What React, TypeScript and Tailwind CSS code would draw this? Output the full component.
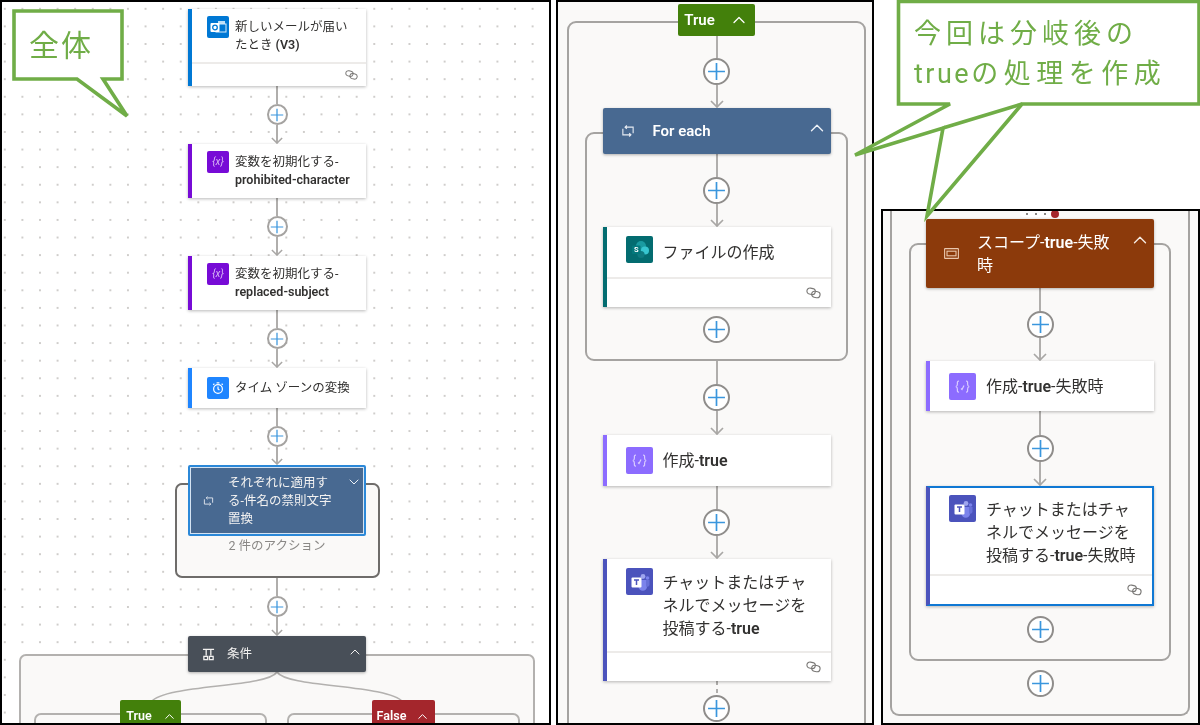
import React from "react";
import { ChevronUp, ChevronDown } from "lucide-react";

const Plus = ({ big }: { big?: boolean }) => (
  <div className={big ? "flex h-[27px] w-[27px] shrink-0 items-center justify-center rounded-full border-2 border-[#8f8d8b] bg-white" : "flex h-[21px] w-[21px] shrink-0 items-center justify-center rounded-full border-2 border-[#a5a3a1] bg-white"}>
    <svg viewBox="0 0 18 18" className={big ? "h-[19px] w-[19px]" : "h-[14px] w-[14px]"} fill="none" stroke="#3a96dd" strokeWidth="1.6">
      <path d="M9 1v16M1 9h16" />
    </svg>
  </div>
);

const Arrow = ({ big }: { big?: boolean }) => (
  <svg viewBox="0 0 14 8" className={big ? "-mt-[7px] h-[8px] w-[14px]" : "-mt-[6px] h-[7px] w-[12px]"} fill="none" stroke="#a9a7a5" strokeWidth="1.7">
    <path d="M1 1l6 6 6-6" />
  </svg>
);

const Connector = ({ big, className }: { big?: boolean; className: string }) => (
  <div className={`flex flex-col items-center ${className}`}>
    <div className="w-[2px] grow bg-[#b0aeac]" />
    <Plus big={big} />
    <div className="w-[2px] grow bg-[#b0aeac]" />
    <Arrow big={big} />
  </div>
);

const LinkIcon = ({ big }: { big?: boolean }) => (
  <svg viewBox="0 0 16 12" className={big ? "h-[12px] w-[15px]" : "h-[10px] w-[13px]"} fill="none" stroke="#7a7876" strokeWidth="1.2">
    <rect x="1" y="1" width="9" height="6.4" rx="3.2" transform="rotate(12 5.5 4)" />
    <rect x="6" y="4.4" width="9" height="6.4" rx="3.2" transform="rotate(12 10.5 7.6)" />
  </svg>
);

const IconBox = ({ color, big, children }: { color: string; big?: boolean; children: React.ReactNode }) => (
  <div className={`flex shrink-0 items-center justify-center rounded-[2px] ${color} ${big ? "h-[27px] w-[27px]" : "h-[22px] w-[22px]"}`}>{children}</div>
);

const OutlookGlyph = () => (
  <svg viewBox="0 0 22 22" className="h-[22px] w-[22px]">
    <rect x="11" y="5" width="7" height="3" fill="#bfe0f7" />
    <rect x="9" y="8" width="10" height="8" fill="none" stroke="#d7ecfb" strokeWidth="1" />
    <rect x="3.5" y="7" width="9" height="9" rx="1" fill="#fff" />
    <circle cx="8" cy="11.5" r="2.3" fill="none" stroke="#0078d4" strokeWidth="1.3" />
  </svg>
);
const VarGlyph = () => <span className="text-[10px] italic leading-none text-[#d9b8f5]">{"{x}"}</span>;
const ClockGlyph = () => (
  <svg viewBox="0 0 22 22" className="h-[22px] w-[22px]" fill="none" stroke="#fff" strokeWidth="1.2">
    <circle cx="11" cy="12" r="4.4" />
    <path d="M11 9.6V12l1.4 1M7.4 6.8l-1.2 1M14.6 6.8l1.2 1M9.6 5.8h2.8" />
  </svg>
);
const ComposeGlyph = () => (
  <svg viewBox="0 0 27 27" className="h-[27px] w-[27px]" fill="none" stroke="#d9ccff" strokeWidth="1.2">
    <path d="M10 8c-2 0-1.6 1.6-1.6 3 0 1.6-.4 2.4-1.6 2.6 1.2.2 1.6 1 1.6 2.6 0 1.4-.4 3 1.6 3M17 8c2 0 1.6 1.6 1.6 3 0 1.6.4 2.4 1.6 2.6-1.2.2-1.6 1-1.6 2.6 0 1.4.4 3-1.6 3M12 15.5l1 1 2-4" />
  </svg>
);
const TeamsGlyph = () => (
  <svg viewBox="0 0 27 27" className="h-[27px] w-[27px]">
    <circle cx="17" cy="8.5" r="2.4" fill="#9ea5ee" />
    <circle cx="21.5" cy="10" r="1.8" fill="#7b83eb" />
    <path d="M12.5 12h8.5v6.5a4 4 0 0 1-8.5 0z" fill="#7b83eb" />
    <path d="M20 12h3.5v4.5a2.4 2.4 0 0 1-3.5 2z" fill="#6770d8" />
    <rect x="5.5" y="9.5" width="10" height="10" rx="1" fill="#fff" />
    <path d="M8 12h5M10.5 12v5" stroke="#4b53bc" strokeWidth="1.5" />
  </svg>
);
const SharePointGlyph = () => (
  <svg viewBox="0 0 27 27" className="h-[27px] w-[27px]">
    <circle cx="15" cy="10" r="5" fill="#1a9ba1" />
    <circle cx="19" cy="14.5" r="4" fill="#37c6d0" />
    <circle cx="15" cy="18.5" r="3.6" fill="#0f7a80" />
    <rect x="6" y="9.5" width="8.5" height="8.5" rx="1" fill="#03787c" />
    <text x="10.2" y="16.4" fontSize="7.5" fontWeight="700" fill="#fff" textAnchor="middle">S</text>
  </svg>
);
const LoopGlyph = ({ big }: { big?: boolean }) => (
  <svg viewBox="0 0 16 14" className={big ? "h-[12px] w-[14px]" : "h-[10px] w-[11px]"} fill="none" stroke="#e6ebf2" strokeWidth="1.3">
    <path d="M2 4.5v7h9M14 9.5v-7H5M9.4 9.6l2 1.9-2 1.9M6.6.6l-2 1.9 2 1.9" />
  </svg>
);
const CondGlyph = () => (
  <svg viewBox="0 0 14 14" className="h-[13px] w-[13px]" fill="none" stroke="#f3f2f1" strokeWidth="1.4">
    <path d="M1 1.5h12M4.5 2v6M9.5 2v6M2 12.5h4v-3.5H2zM8 12.5h4v-3.5H8z" />
  </svg>
);
const ScopeGlyph = () => (
  <svg viewBox="0 0 15 11" className="h-[11px] w-[15px]" fill="none" stroke="#e9c6ad" strokeWidth="1.1">
    <rect x="0.6" y="0.6" width="13.8" height="9.8" rx="0.5" />
    <rect x="3" y="3.2" width="9" height="4.6" />
  </svg>
);

const B = ({ children }: { children: React.ReactNode }) => <span className="font-semibold">{children}</span>;

type CardProps = {
  accent: string;
  iconColor: string;
  glyph: React.ReactNode;
  big?: boolean;
  footer?: boolean;
  selected?: boolean;
  className: string;
  center?: boolean;
  children: React.ReactNode;
};

const Card = ({ accent, iconColor, glyph, big, footer, selected, className, center, children }: CardProps) => (
  <div className={`relative flex shrink-0 flex-col border-l-[4px] bg-white shadow-[0_1px_3px_rgba(0,0,0,0.28)] ${big ? "w-[228px]" : "w-[178px]"} ${accent} ${selected ? "border-y-2 border-r-2 border-y-[#0f78d4] border-r-[#0f78d4]" : ""} ${className}`}>
    <div className={`flex grow ${center ? "items-center" : "items-start"} ${big ? "pl-[19px] gap-[10px]" : "pl-[15px] gap-[6px]"} ${!center ? (big ? (selected ? "pt-[7px]" : "pt-[9px]") : "pt-[7px]") : ""}`}>
      <IconBox color={iconColor} big={big}>{glyph}</IconBox>
      <div className={`text-[#323130] ${big ? "text-[16px] leading-[23px]" : "text-[12.5px] leading-[18px]"} ${!center ? (big ? "mt-[3px]" : "mt-[2px]") : ""}`}>{children}</div>
    </div>
    {footer && (
      <div className={`flex items-center justify-end border-t-2 border-[#edebe9] ${big ? "h-[30px] pr-[10px]" : "h-[24px] pr-[8px]"}`}>
        <LinkIcon big={big} />
      </div>
    )}
  </div>
);

const Panel1 = () => (
  <div className="relative h-[725px] w-[551px] shrink-0 overflow-hidden border-2 border-black bg-white bg-[radial-gradient(circle,#cfcdcb_0.8px,transparent_1px)] bg-[size:17.6px_17.6px] bg-[position:-6px_-2px] pl-[3px] pt-[7px]">
    <div className="flex flex-col items-center">
      <Card accent="border-l-[#0078d4]" iconColor="bg-[#0078d4]" glyph={<OutlookGlyph />} footer className="h-[77px]">
        新しいメールが届い<br />たとき <B>(V3)</B>
      </Card>
      <Connector className="h-[58px]" />
      <Card accent="border-l-[#770bd6]" iconColor="bg-[#770bd6]" glyph={<VarGlyph />} className="h-[54px]">
        変数を初期化する-<br /><B>prohibited-character</B>
      </Card>
      <Connector className="h-[58px]" />
      <Card accent="border-l-[#770bd6]" iconColor="bg-[#770bd6]" glyph={<VarGlyph />} className="h-[54px]">
        変数を初期化する-<br /><B>replaced-subject</B>
      </Card>
      <Connector className="h-[58px]" />
      <Card accent="border-l-[#1f85ff]" iconColor="bg-[#1f85ff]" glyph={<ClockGlyph />} center className="h-[40px]">
        タイム ゾーンの変換
      </Card>
      <Connector className="h-[57px]" />
      <div className="relative z-10 flex h-[71px] w-[178px] shrink-0 items-center rounded-[2px] border-2 border-[#2b88d8] bg-[#486991] shadow-[inset_0_0_0_1px_#d5e3f2]">
        <div className="flex w-[38px] shrink-0 justify-end pr-[14px]"><LoopGlyph /></div>
        <div className="text-[12.5px] leading-[18px] text-[#f3f2f1]">それぞれに適用す<br />る-件名の禁則文字<br />置換</div>
        <ChevronDown className="absolute right-[2px] top-[7px] h-[16px] w-[16px] text-[#eef2f7]" strokeWidth={1.5} />
      </div>
      <div className="-mt-[53px] flex h-[95px] w-[205px] shrink-0 flex-col items-center justify-end rounded-[7px] border-2 border-[#6e6c6a] bg-[#faf9f8] pb-[21px]">
        <span className="text-[12.5px] leading-[18px] text-[#8a8886]">2 件のアクション</span>
      </div>
      <Connector className="h-[58px]" />
      <div className="relative z-10 flex h-[36px] w-[178px] shrink-0 items-center rounded-[2px] bg-[#484f58] pl-[14px] shadow-[0_1px_3px_rgba(0,0,0,0.3)]">
        <CondGlyph />
        <span className="ml-[12px] text-[12.5px] text-[#f3f2f1]">条件</span>
        <ChevronUp className="absolute right-[3px] top-[8px] h-[16px] w-[16px] text-[#f3f2f1]" strokeWidth={1.5} />
      </div>
      <div className="relative -mt-[18px] h-[120px] w-[516px] shrink-0 rounded-[7px] border-2 border-[#b3b1af] bg-[#faf9f8] px-[13px] pt-[44px]">
        <svg viewBox="0 0 512 46" className="absolute left-0 top-[14px] h-[46px] w-[512px]" fill="none" stroke="#b3b1af" strokeWidth="1.6">
          <path d="M256 2C246 18 145 14 130 32M256 2C266 18 366 14 382 32" />
        </svg>
        <div className="relative grid grid-cols-2 gap-[20px]">
          {[
            { t: "True", c: "bg-[#43800b]", w: "w-[61px]", g: "gap-[10px] pl-[2px]" },
            { t: "False", c: "bg-[#a4262c]", w: "w-[63px]", g: "gap-[9px]" },
          ].map((b) => (
            <div key={b.t} className="flex flex-col items-center">
              <div className={`relative z-10 flex h-[32px] shrink-0 items-center justify-center rounded-[2px] text-[12.5px] font-semibold text-white ${b.c} ${b.w} ${b.g}`}>
                {b.t}
                <ChevronUp className="h-[15px] w-[15px]" strokeWidth={1.6} />
              </div>
              <div className="-mt-[19px] h-[60px] w-full rounded-[7px] border-2 border-[#b3b1af] bg-[#faf9f8]" />
            </div>
          ))}
        </div>
      </div>
    </div>
  </div>
);

const Panel2 = () => (
  <div className="ml-[5px] h-[725px] w-[318px] shrink-0 overflow-hidden border-2 border-black bg-[#faf9f8] pl-[9px] pt-[2px]">
    <div className="flex w-[299px] flex-col items-center">
      <div className="relative z-10 flex h-[32px] w-[77px] shrink-0 items-center justify-center gap-[14px] rounded-[2px] bg-[#43800b] text-[15px] font-semibold text-white">
        True
        <ChevronUp className="h-[20px] w-[20px]" strokeWidth={1.5} />
      </div>
      <div className="-mt-[15px] flex h-[760px] w-[299px] shrink-0 flex-col items-center rounded-[9px] border-2 border-[#a5a3a1] pt-[13px]">
        <Connector big className="h-[72px]" />
        <div className="relative z-10 flex h-[46px] w-[228px] shrink-0 items-center rounded-[2px] bg-[#486991] pl-[18px] shadow-[0_1px_3px_rgba(0,0,0,0.3)]">
          <LoopGlyph big />
          <span className="ml-[18px] text-[15px] font-semibold text-white">For each</span>
          <ChevronUp className="absolute right-[3px] top-[9px] h-[22px] w-[22px] text-[#eef2f7]" strokeWidth={1.5} />
        </div>
        <div className="-mt-[22px] flex h-[229px] w-[263px] shrink-0 flex-col items-center rounded-[9px] border-2 border-[#a5a3a1] pt-[20px]">
          <Connector big className="h-[73px]" />
          <Card big footer accent="border-l-[#036c70]" iconColor="bg-[#036c70]" glyph={<SharePointGlyph />} className="h-[80px]">
            <div className="pt-[2px]">ファイルの作成</div>
          </Card>
          <div className="mt-[9px]"><Plus big /></div>
        </div>
        <Connector big className="h-[74px]" />
        <Card big center accent="border-l-[#8c6cff]" iconColor="bg-[#8c6cff]" glyph={<ComposeGlyph />} className="h-[51px]">
          作成-<B>true</B>
        </Card>
        <Connector big className="h-[73px]" />
        <Card big footer accent="border-l-[#4b53bc]" iconColor="bg-[#4b53bc]" glyph={<TeamsGlyph />} className="h-[122px]">
          チャットまたはチャ<br />ネルでメッセージを<br />投稿する-<B>true</B>
        </Card>
        <div className="h-[14px] w-[2px] bg-[repeating-linear-gradient(to_bottom,#b0aeac_0,#b0aeac_4px,transparent_4px,transparent_8px)]" />
        <Plus big />
      </div>
    </div>
  </div>
);

const Panel3 = () => (
  <div className="relative ml-[7px] mt-[209px] h-[516px] w-[319px] shrink-0 overflow-hidden border-2 border-black bg-[#faf9f8] pl-[7px]">
    <div className="flex h-[505px] w-[300px] flex-col items-center rounded-b-[9px] border-x-2 border-b-2 border-[#a5a3a1] pt-[8px]">
      <div className="relative z-10 flex h-[69px] w-[228px] shrink-0 items-center rounded-[2px] bg-[#8c3a0b] pl-[18px] shadow-[0_1px_3px_rgba(0,0,0,0.3)]">
        <ScopeGlyph />
        <div className="ml-[18px] text-[16px] leading-[23px] text-white">スコープ-<B>true</B>-失敗<br />時</div>
        <ChevronUp className="absolute right-[3px] top-[10px] h-[22px] w-[22px] text-[#f5ebe3]" strokeWidth={1.5} />
      </div>
      <div className="-mt-[45px] flex h-[418px] w-[262px] shrink-0 flex-col items-center rounded-[9px] border-2 border-[#a5a3a1] pt-[43px]">
        <Connector big className="h-[73px]" />
        <Card big center accent="border-l-[#8c6cff]" iconColor="bg-[#8c6cff]" glyph={<ComposeGlyph />} className="h-[50px]">
          作成-<B>true</B>-失敗時
        </Card>
        <Connector big className="h-[75px]" />
        <Card big footer selected accent="border-l-[#4b53bc]" iconColor="bg-[#4b53bc]" glyph={<TeamsGlyph />} className="h-[120px]">
          チャットまたはチャ<br />ネルでメッセージを<br />投稿する-<B>true</B>-失敗時
        </Card>
        <div className="mt-[10px]"><Plus big /></div>
      </div>
      <div className="mt-[9px]"><Plus big /></div>
    </div>
    <div className="absolute left-[137px] top-0 flex h-[6px] w-[38px] items-center gap-[7px] rounded-b-[4px] bg-white pl-[6px]">
      <span className="h-[2px] w-[2px] rounded-full bg-[#605e5c]" />
      <span className="h-[2px] w-[2px] rounded-full bg-[#605e5c]" />
      <span className="h-[2px] w-[2px] rounded-full bg-[#605e5c]" />
    </div>
    <div className="absolute left-[168px] -top-[1px] h-[8px] w-[8px] rounded-full bg-[#a4262c]" />
  </div>
);

export default function App() {
  return (
    <div className="relative flex h-[725px] w-[1200px] overflow-hidden bg-white font-['Roboto','Noto_Sans_CJK_JP',sans-serif] blur-[0.35px]">
      <Panel1 />
      <Panel2 />
      <Panel3 />
      <svg viewBox="0 0 1200 725" className="pointer-events-none absolute left-0 top-0 z-20 h-[725px] w-[1200px]" fill="#fff" stroke="#70ad47" strokeWidth="3.6">
        <polygon points="14,11 122,11 122,79 103,79 127,116 77,79 14,79" />
        <polygon points="898.5,1.5 1199,1.5 1199,104 1022,104 927,216 943,128 855,155 950,104 898.5,104" />
        <path d="M943 128L1022 104" fill="none" />
      </svg>
      <div className="absolute left-[29px] top-[24px] z-30 text-[30px] leading-[44px] tracking-[2px] text-[#70ad47]">全体</div>
      <div className="absolute left-[914px] top-[14px] z-30 text-[27px] leading-[40px] tracking-[5px] text-[#70ad47]">
        今回は分岐後の<br /><span className="tracking-[2.5px]">true</span><span className="tracking-[5.5px]">の処理を作成</span>
      </div>
    </div>
  );
}
